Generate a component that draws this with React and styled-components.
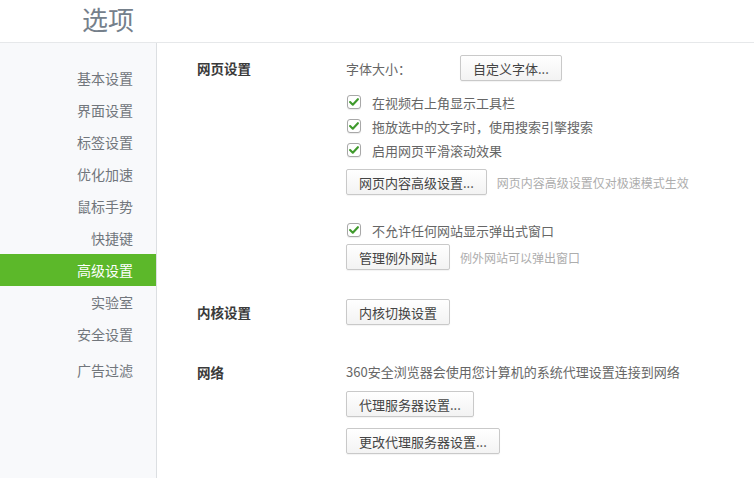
import styled, { createGlobalStyle } from 'styled-components'

const GlobalStyle = createGlobalStyle`
    html, body {
        margin: 0;
        padding: 0;
        background: #ffffff;
    }
    body {
        font-family: "Noto Sans CJK SC", "Noto Sans", "Liberation Sans", sans-serif;
        color: #666;
    }
`

// subComponents
const CheckIcon = () => (
    <svg width="10" height="8" viewBox="0 0 10 8">
        <path d="M1.1 4.1 L3.8 6.7 L8.9 1.2" fill="none" stroke="#3f9a2c" strokeWidth="2.1" strokeLinecap="round" strokeLinejoin="round" />
    </svg>
)

// eslint-disable-next-line react/prop-types
const CheckRow = ({ children }) => (
    <CheckLine>
        <Box><CheckIcon /></Box>
        <CheckText>{children}</CheckText>
    </CheckLine>
)

//mainComponent
const App = () => {
    const navList = ['基本设置', '界面设置', '标签设置', '优化加速', '鼠标手势', '快捷键', '高级设置', '实验室', '安全设置', '广告过滤']
    return (
        <Page>
            <GlobalStyle />
            <Header>
                <Title>选项</Title>
            </Header>
            <Body>
                <Sidebar>
                    {navList.map((item, index) => (
                        <NavItem key={index} $active={item === '高级设置'} $last={index === navList.length - 1}>
                            {item}
                        </NavItem>
                    ))}
                </Sidebar>
                <Main>
                    <Section>
                        <Label>网页设置</Label>
                        <Fields>
                            <Line>
                                <FieldName>字体大小：</FieldName>
                                <Button>自定义字体...</Button>
                            </Line>
                            <Checks>
                                <CheckRow>在视频右上角显示工具栏</CheckRow>
                                <CheckRow>拖放选中的文字时，使用搜索引擎搜索</CheckRow>
                                <CheckRow>启用网页平滑滚动效果</CheckRow>
                            </Checks>
                            <Line $top={7}>
                                <Button>网页内容高级设置...</Button>
                                <Hint>网页内容高级设置仅对极速模式生效</Hint>
                            </Line>
                            <Checks $top={23}>
                                <CheckRow>不允许任何网站显示弹出式窗口</CheckRow>
                            </Checks>
                            <Line $top={2}>
                                <Button>管理例外网站</Button>
                                <Hint>例外网站可以弹出窗口</Hint>
                            </Line>
                        </Fields>
                    </Section>
                    <Section $top={29}>
                        <Label>内核设置</Label>
                        <Fields>
                            <Line>
                                <Button>内核切换设置</Button>
                            </Line>
                        </Fields>
                    </Section>
                    <Section $top={35}>
                        <Label $h={24}>网络</Label>
                        <Fields>
                            <Text>360安全浏览器会使用您计算机的系统代理设置连接到网络</Text>
                            <Line $top={7}>
                                <Button>代理服务器设置...</Button>
                            </Line>
                            <Line $top={11}>
                                <Button>更改代理服务器设置...</Button>
                            </Line>
                        </Fields>
                    </Section>
                </Main>
            </Body>
        </Page>
    )
}

export default App

//styles
const Page = styled.div`
    display: flex;
    flex-direction: column;
    height: 100vh;
    overflow: hidden;
`
const Header = styled.header`
    height: 42px;
    flex-shrink: 0;
    display: flex;
    align-items: center;
    padding-left: 82px;
    border-bottom: 1px solid #e6e8ea;
`
const Title = styled.h1`
    margin: 0 0 5px;
    font-size: 26px;
    font-weight: 400;
    color: #75808b;
`
const Body = styled.div`
    display: flex;
    flex: 1;
`
const Sidebar = styled.nav`
    width: 156px;
    flex-shrink: 0;
    background: #f8f9fb;
    border-right: 1px solid #dcdfe2;
    padding-top: 19px;
`
const NavItem = styled.div`
    height: 32px;
    line-height: 32px;
    text-align: right;
    padding-right: 23px;
    font-size: 14px;
    color: ${p => (p.$active ? '#ffffff' : '#71767c')};
    background: ${p => (p.$active ? '#5cb82a' : 'transparent')};
    margin-top: ${p => (p.$last ? '4px' : '0')};
    cursor: pointer;
`
const Main = styled.main`
    flex: 1;
    padding: 12px 0 0 40px;
`
const Section = styled.section`
    display: grid;
    grid-template-columns: 149px 1fr;
    align-items: start;
    margin-top: ${p => p.$top || 0}px;
`
const Label = styled.div`
    height: ${p => p.$h || 26}px;
    line-height: ${p => p.$h || 26}px;
    font-size: 13.5px;
    font-weight: 700;
    color: #3a3a3a;
`
const Fields = styled.div`
    display: flex;
    flex-direction: column;
    align-items: flex-start;
`
const Line = styled.div`
    display: flex;
    align-items: center;
    margin-top: ${p => p.$top || 0}px;
`
const FieldName = styled.span`
    width: 114px;
    font-size: 13px;
    color: #666;
`
const Button = styled.button`
    height: 26px;
    padding: 0 12px;
    font-family: inherit;
    font-size: 13px;
    color: #444;
    background: linear-gradient(#ffffff, #f3f3f3);
    border: 1px solid #c9c9c9;
    border-radius: 2px;
    box-shadow: 0 1px 1px rgba(0, 0, 0, 0.05);
    cursor: pointer;
`
const Hint = styled.span`
    margin-left: 10px;
    font-size: 12px;
    color: #adadad;
`
const Checks = styled.div`
    display: flex;
    flex-direction: column;
    margin-top: ${p => (p.$top === undefined ? 9 : p.$top)}px;
`
const CheckLine = styled.label`
    display: flex;
    align-items: center;
    height: 24px;
    font-size: 13px;
    color: #666;
`
const Box = styled.div`
    width: 14px;
    height: 14px;
    margin-left: 1px;
    box-sizing: border-box;
    border: 1px solid #a8a8a8;
    border-radius: 3px;
    background: #fff;
    box-shadow: 0 1px 1px rgba(0, 0, 0, 0.08);
    display: flex;
    align-items: center;
    justify-content: center;
`
const CheckText = styled.span`
    margin-left: 11px;
`
const Text = styled.div`
    height: 24px;
    line-height: 24px;
    font-size: 13px;
    color: #666;
`
